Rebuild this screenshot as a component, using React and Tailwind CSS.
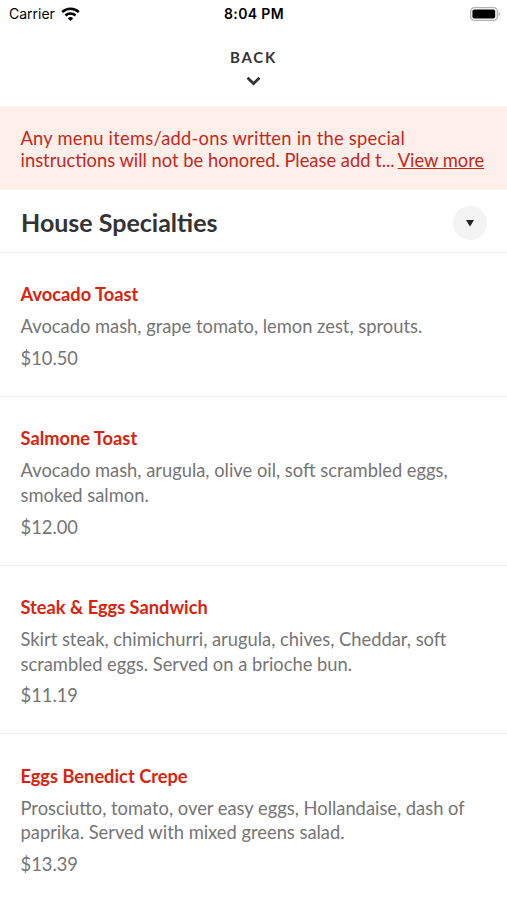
const items = [
  {
    name: 'Avocado Toast',
    description: ['Avocado mash, grape tomato, lemon zest, sprouts.'],
    price: '$10.50',
  },
  {
    name: 'Salmone Toast',
    description: ['Avocado mash, arugula, olive oil, soft scrambled eggs,', 'smoked salmon.'],
    price: '$12.00',
  },
  {
    name: 'Steak & Eggs Sandwich',
    description: ['Skirt steak, chimichurri, arugula, chives, Cheddar, soft', 'scrambled eggs. Served on a brioche bun.'],
    price: '$11.19',
  },
  {
    name: 'Eggs Benedict Crepe',
    description: ['Prosciutto, tomato, over easy eggs, Hollandaise, dash of', 'paprika. Served with mixed greens salad.'],
    price: '$13.39',
  },
];

const StatusBar = () => (
  <div className="flex h-[27px] items-center justify-between pl-[9px] pr-[6px] font-['Inter',sans-serif] text-[14px] text-black">
    <div className="flex flex-1 items-center gap-1.5">
      <span>Carrier</span>
      <svg width="19" height="14" viewBox="0 0 19 14" fill="none" stroke="#000" strokeWidth="2.5">
        <path d="M1.2 5.2a11.8 11.8 0 0 1 16.6 0" />
        <path d="M4.4 8.5a7.2 7.2 0 0 1 10.2 0" />
        <path d="M9.5 14l-2.7-2.8a3.9 3.9 0 0 1 5.4 0z" fill="#000" stroke="none" />
      </svg>
    </div>
    <span className="mr-0.5 font-semibold tracking-[0.35px]">8:04 PM</span>
    <div className="flex flex-1 justify-end">
      <svg width="31" height="14" viewBox="0 0 31 14">
        <rect x="0.7" y="0.7" width="26.6" height="12.6" rx="3.8" fill="none" stroke="#b3b3b3" strokeWidth="1.3" />
        <rect x="2.4" y="2.4" width="22.8" height="9.2" rx="2" fill="#000" />
        <path d="M28.6 4.8c2 .8 2 3.6 0 4.4z" fill="#b3b3b3" />
      </svg>
    </div>
  </div>
);

const MenuItem = ({ item }) => (
  <div className="border-b border-[#efefef] px-[20.5px] pb-[25.1px] pt-[29.4px]">
    <h3 className="text-[18.25px] font-bold leading-[25px] text-[#d9230f]">{item.name}</h3>
    <div className="mt-[7px] text-[18.33px] leading-[24.6px] text-[#757575]">
      {item.description.map((line) => (
        <p key={line} className="whitespace-nowrap">{line}</p>
      ))}
    </div>
    <p className="mt-[7px] text-[18.33px] leading-[25px] text-[#757575]">{item.price}</p>
  </div>
);

const App = () => {
  return (
    <div className="h-[900px] w-[507px] overflow-hidden bg-white font-['Lato',sans-serif]">
      <StatusBar />

      <button className="flex h-[79px] w-full flex-col items-center pt-5 text-[#333]">
        <span className="text-[15px] font-bold leading-5 tracking-[1.7px]">BACK</span>
        <svg className="mr-px mt-[9px]" width="15" height="11" viewBox="0 0 15 11" fill="none" stroke="#333" strokeWidth="2.8">
          <path d="M1.5 1.8l6 5.8 6-5.8" />
        </svg>
      </button>

      {/* Notice */}
      <div className="h-[84px] bg-[#ffefeb] px-[20.5px] pt-[21px] text-[18.33px] leading-[22px] text-[#c5291c]">
        <p className="whitespace-nowrap tracking-[0.24px] [font-feature-settings:'liga'_1]">
          Any menu items/add-ons written in the special
        </p>
        <div className="flex gap-[3px] whitespace-nowrap">
          <span>instructions will not be honored. Please add t...</span>
          <a className="underline">View more</a>
        </div>
      </div>

      {/* Category */}
      <div className="flex h-[63px] items-center justify-between border-b border-[#efefef] pl-[21px] pr-5">
        <h2 className="pt-1 text-[25px] font-bold text-[#333]">House Specialties</h2>
        <button className="mt-[3px] flex size-[34px] items-center justify-center rounded-full bg-[#f3f3f3]">
          <svg width="10" height="8" viewBox="0 0 10 8" fill="#222">
            <path d="M1 1h8L5 7.4z" />
          </svg>
        </button>
      </div>

      {items.map((item) => (
        <MenuItem key={item.name} item={item} />
      ))}
    </div>
  );
};

export default App;
